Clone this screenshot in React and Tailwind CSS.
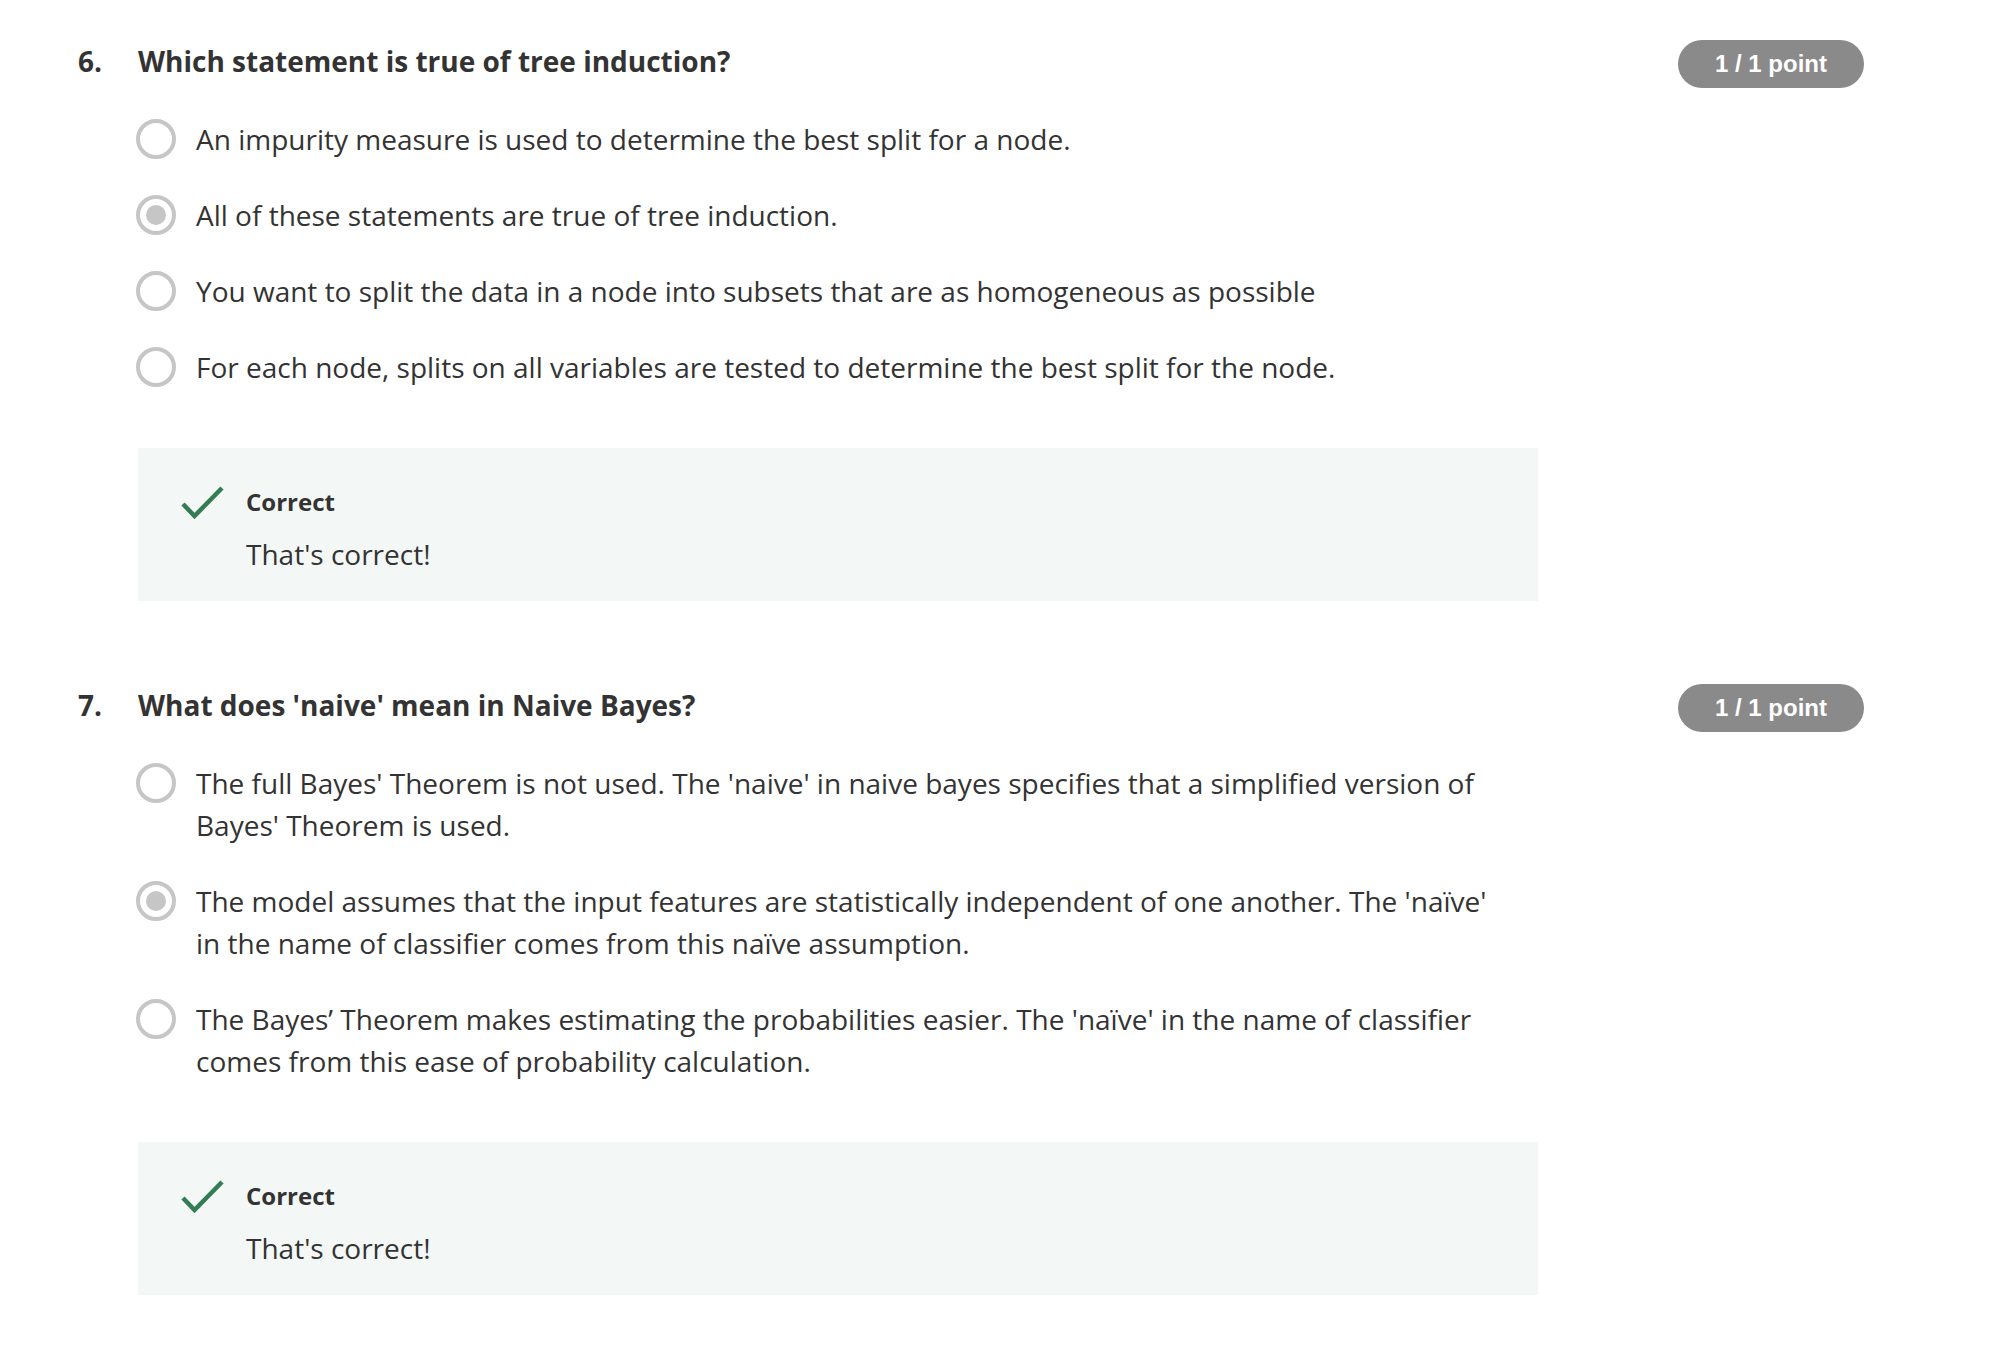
const questions = [
  {
    num: '6.',
    title: 'Which statement is true of tree induction?',
    options: [
      { text: 'An impurity measure is used to determine the best split for a node.' },
      { text: 'All of these statements are true of tree induction.', selected: true },
      { text: 'You want to split the data in a node into subsets that are as homogeneous as possible' },
      { text: 'For each node, splits on all variables are tested to determine the best split for the node.' },
    ],
  },
  {
    num: '7.',
    title: "What does 'naive' mean in Naive Bayes?",
    options: [
      { text: "The full Bayes' Theorem is not used. The 'naive' in naive bayes specifies that a simplified version of Bayes' Theorem is used." },
      { text: "The model assumes that the input features are statistically independent of one another. The 'naïve' in the name of classifier comes from this naïve assumption.", selected: true },
      { text: "The Bayes’ Theorem makes estimating the probabilities easier. The 'naïve' in the name of classifier comes from this ease of probability calculation." },
    ],
  },
];

const Radio = ({ selected }) => (
  <div className="mt-[1px] w-[40px] h-[40px] shrink-0 rounded-full border-[4px] border-[#c6c6c6] flex items-center justify-center">
    {selected && <div className="w-[20px] h-[20px] rounded-full bg-[#c6c6c6]"></div>}
  </div>
);

const CheckIcon = () => (
  <svg width="44" height="34" viewBox="0 0 44 34" fill="none">
    <path d="M2 19 L13.5 31 L41 3" stroke="#347d54" strokeWidth="4.5" />
  </svg>
);

const Question = ({ q }) => (
  <div className="flex items-start">
    <div className="w-[60px] shrink-0 text-[28px] leading-[42px] font-bold text-[#333]">{q.num}</div>
    <div className="w-[1400px] shrink-0">
      <div className="text-[28px] leading-[42px] font-bold text-[#333]">{q.title}</div>
      <div className="mt-[36px] flex flex-col gap-[34px]">
        {q.options.map((opt, i) => (
          <div key={i} className="flex items-start gap-[20px] -ml-[2px]">
            <Radio selected={opt.selected} />
            <div className="text-[28px] leading-[42px] text-[#333] pr-[40px]">{opt.text}</div>
          </div>
        ))}
      </div>
      <div className="mt-[60px] h-[153px] bg-[#f3f8f6] flex items-start pl-[43px] pt-[38px]">
        <div className="w-[65px] shrink-0 -mt-[1px]">
          <CheckIcon />
        </div>
        <div>
          <div className="text-[24px] leading-[32px] font-bold text-[#333]">Correct</div>
          <div className="mt-[15px] text-[28px] leading-[42px] text-[#333]">That's correct!</div>
        </div>
      </div>
    </div>
    <div className="ml-[140px] h-[48px] w-[186px] shrink-0 rounded-full bg-[#8a8a8a] flex items-center justify-center text-white font-bold text-[24px]" style={{ fontFamily: '"Liberation Sans", Arial, sans-serif' }}>
      1 / 1 point
    </div>
  </div>
);

export default function App() {
  return (
    <div className="min-h-screen bg-white pt-[40px] pl-[78px]" style={{ fontFamily: '"Open Sans", "Noto Sans", sans-serif' }}>
      <div className="flex flex-col gap-[83px]">
        {questions.map((q) => (
          <Question key={q.num} q={q} />
        ))}
      </div>
    </div>
  );
}
